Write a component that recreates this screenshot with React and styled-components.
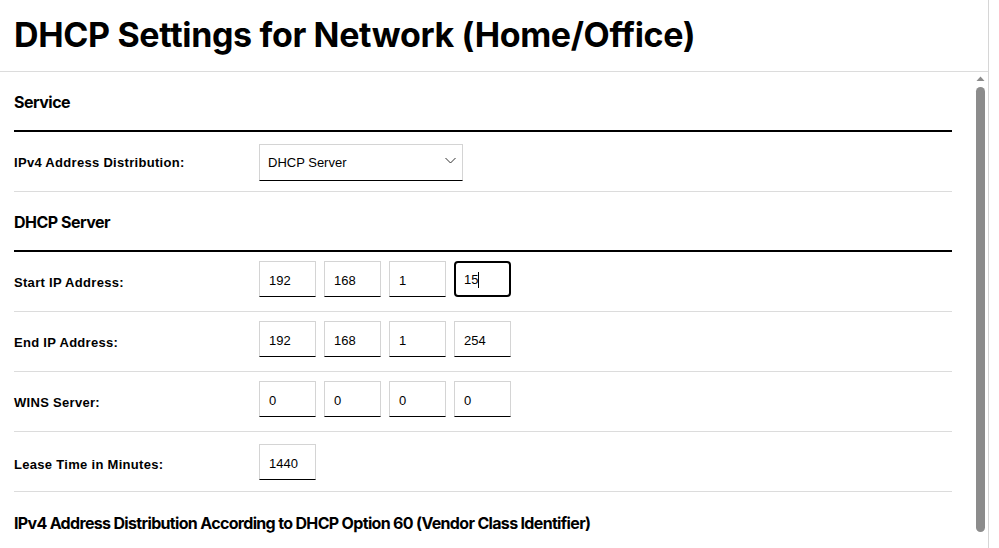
import React from "react";
import styled, { createGlobalStyle } from "styled-components";

const Global = createGlobalStyle`
  html, body { margin: 0; padding: 0; background: #fff; overflow: hidden; }
  * { box-sizing: border-box; }
`;

const Page = styled.div`
  width: 989px;
  height: 548px;
  border-right: 1px solid #d6d6d6;
  display: flex;
  flex-direction: column;
  font-family: "Liberation Sans", Arial, sans-serif;
  color: #000;
`;

const Header = styled.header`
  height: 72px;
  flex: none;
  border-bottom: 1px solid #dcdcdc;
  padding: 13px 0 0 14px;
`;

const Title = styled.h1`
  margin: 0;
  font-family: Inter, "Liberation Sans", sans-serif;
  font-weight: 700;
  font-size: 34px;
  line-height: 44px;
  letter-spacing: -0.35px;
`;

const Body = styled.div`
  flex: 1;
  display: flex;
  min-height: 0;
`;

const Content = styled.main`
  width: 952px;
  padding-left: 14px;
  flex: none;
`;

const SectionHeading = styled.h2`
  margin: 0;
  height: ${(p) => p.$h || 59}px;
  display: flex;
  align-items: center;
  padding-top: 2px;
  font-family: Inter, "Liberation Sans", sans-serif;
  font-weight: 700;
  font-size: 16px;
  letter-spacing: ${(p) => p.$ls || "-0.5px"};
  border-bottom: ${(p) => (p.$rule ? "2px solid #000" : "none")};
`;

const Row = styled.div`
  height: 60px;
  display: flex;
  align-items: flex-start;
  padding-top: ${(p) => p.$pt || 10}px;
  border-bottom: 1px solid #dcdcdc;
`;

const Label = styled.label`
  width: 245px;
  flex: none;
  padding-top: ${(p) => p.$pt ?? 3}px;
  font-weight: 700;
  font-size: 13px;
  line-height: 36px;
  letter-spacing: 0.3px;
`;

const Fields = styled.div`
  display: flex;
  gap: 8px;
`;

const Field = styled.div`
  width: 57px;
  height: 36px;
  border: 1px solid #d4d4d4;
  border-bottom: 1px solid #000;
  padding: 2px 0 0 9px;
  font-size: 13px;
  display: flex;
  align-items: center;
  ${(p) =>
    p.$focus &&
    `
    border: 2px solid #000;
    border-radius: 4px;
    padding: 1px 0 0 8px;
  `}
`;

const Caret = styled.span`
  display: inline-block;
  width: 1px;
  height: 16px;
  background: #000;
`;

const Select = styled.div`
  width: 204px;
  height: 37px;
  margin-top: 2px;
  border: 1px solid #d4d4d4;
  border-bottom: 1px solid #000;
  padding: 0 5px 0 8px;
  display: flex;
  align-items: center;
  justify-content: space-between;
  font-size: 13px;
`;

const ScrollTrack = styled.div`
  width: 10px;
  margin-left: 23px;
  display: flex;
  flex-direction: column;
  align-items: center;
  padding-top: 4px;
`;

const Thumb = styled.div`
  margin-top: 6px;
  width: 9px;
  height: 445px;
  border-radius: 5px;
  background: #8c8c8c;
`;

const Chevron = () => (
  <svg width="12" height="8" viewBox="0 0 12 8" fill="none" style={{ marginTop: -4 }}>
    <path d="M0.5 1 L5.5 6 L10.5 1" stroke="#333" strokeWidth="1" />
  </svg>
);

const UpArrow = () => (
  <svg width="9" height="5" viewBox="0 0 9 5">
    <path d="M0.5 5 L4.5 0.5 L8.5 5 Z" fill="#8c8c8c" />
  </svg>
);

const IpRow = ({ label, values, focusIndex }) => (
  <Row $pt={9}>
    <Label $pt={4}>{label}</Label>
    <Fields>
      {values.map((v, i) => (
        <Field key={i} $focus={i === focusIndex}>
          {v}
          {i === focusIndex && <Caret />}
        </Field>
      ))}
    </Fields>
  </Row>
);

export default function App() {
  return (
    <>
      <Global />
      <Page>
        <Header>
          <Title>DHCP Settings for Network (Home/Office)</Title>
        </Header>
        <Body>
          <Content>
            <SectionHeading $rule $h={60}>Service</SectionHeading>
            <Row>
              <Label>IPv4 Address Distribution:</Label>
              <Select>
                DHCP Server
                <Chevron />
              </Select>
            </Row>
            <SectionHeading $rule $h={60}>DHCP Server</SectionHeading>
            <IpRow label="Start IP Address:" values={["192", "168", "1", "15"]} focusIndex={3} />
            <IpRow label="End IP Address:" values={["192", "168", "1", "254"]} />
            <IpRow label="WINS Server:" values={["0", "0", "0", "0"]} />
            <Row $pt={12}>
              <Label>Lease Time in Minutes:</Label>
              <Fields>
                <Field>1440</Field>
              </Fields>
            </Row>
            <SectionHeading $h={60} $ls="-0.67px">
              IPv4 Address Distribution According to DHCP Option 60 (Vendor Class Identifier)
            </SectionHeading>
          </Content>
          <ScrollTrack>
            <UpArrow />
            <Thumb />
          </ScrollTrack>
        </Body>
      </Page>
    </>
  );
}
